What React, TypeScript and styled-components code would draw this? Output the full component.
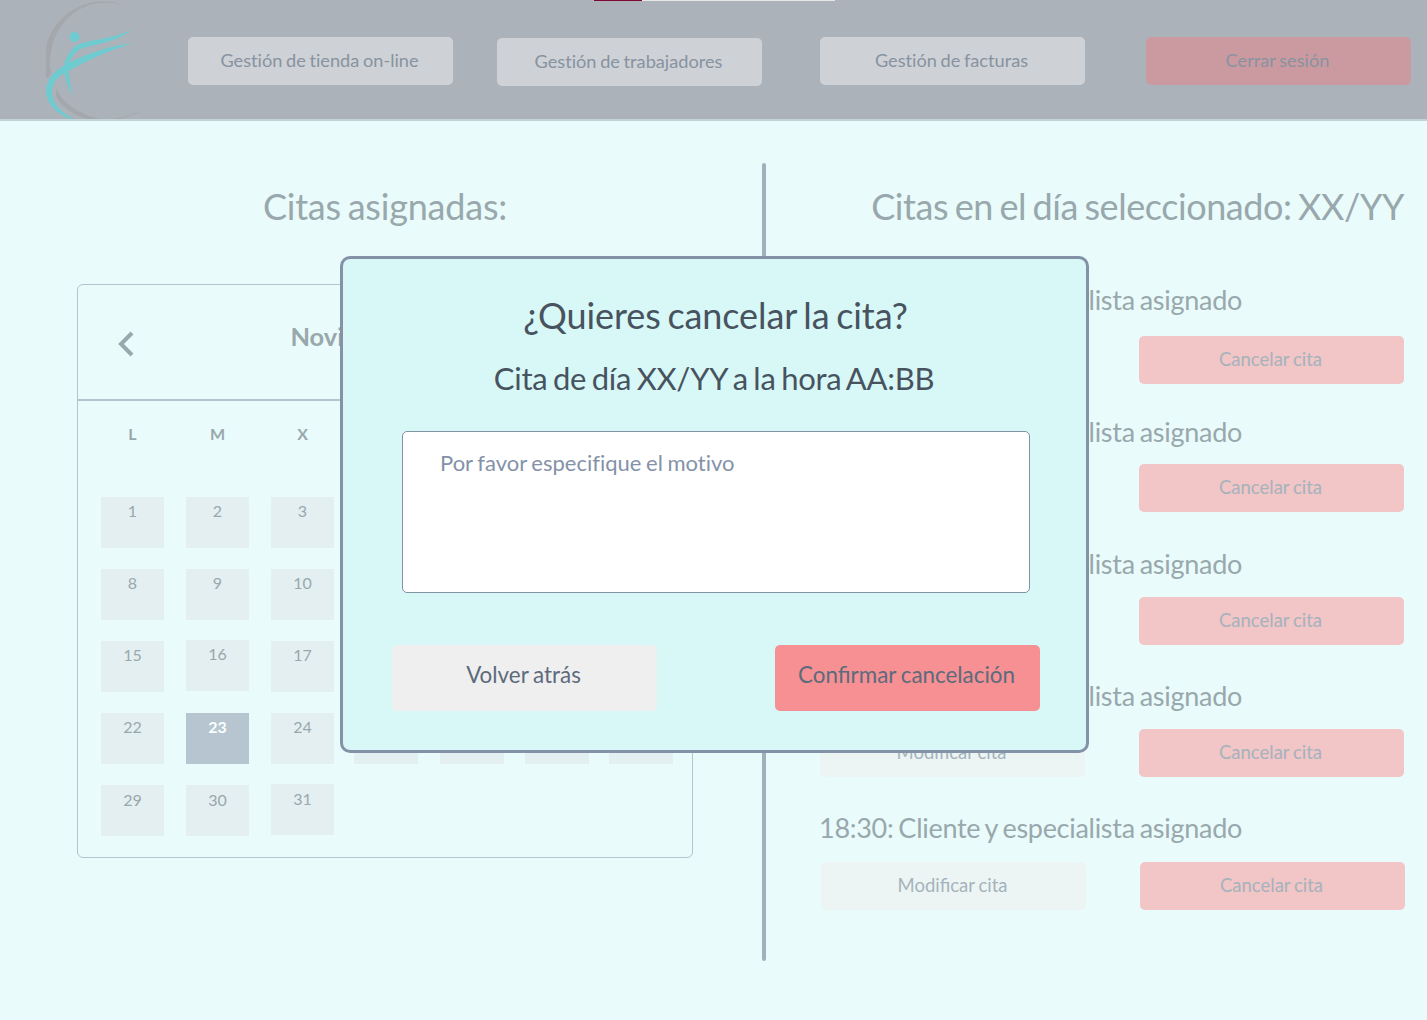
import React from 'react';
import styled, { createGlobalStyle } from 'styled-components';

const GlobalStyle = createGlobalStyle`
  *, *::before, *::after { box-sizing: border-box; }
  body {
    margin: 0;
    background: #eafbfb;
    font-family: Lato, 'Open Sans', sans-serif;
    word-spacing: -1px;
  }
  button, textarea { font-family: inherit; word-spacing: inherit; }
`;

const Page = styled.div`
  position: relative;
  width: 1427px;
  height: 1020px;
  overflow: hidden;
  background: #eafbfb;
`;

const Progress = styled.div`
  position: absolute;
  top: 0;
  left: 594px;
  width: 241px;
  height: 1px;
  background: #e4e6e8;
`;

const ProgressFill = styled.div`
  width: 48px;
  height: 1px;
  background: #7d0633;
`;

const Header = styled.header`
  display: flex;
  align-items: flex-start;
  height: 121px;
  background: #acb2ba;
  border-bottom: 2px solid #c3d3d7;
`;

const LogoMark = styled.svg`
  display: block;
  flex: none;
  width: 188px;
  height: 119px;
`;

const NavButton = styled.button<{ $gap?: number; $top?: number; $danger?: boolean }>`
  flex: none;
  width: 265px;
  height: 48px;
  margin: ${(p) => p.$top ?? 37}px 0 0 ${(p) => p.$gap ?? 0}px;
  padding: 0 2px 2px 0;
  border: 0;
  border-radius: 5px;
  background: ${(p) => (p.$danger ? '#cb9aa1' : '#ced1d6')};
  color: #8793a0;
  font-size: 18.2px;
  font-variant-ligatures: none;
  line-height: 46px;
`;

const Main = styled.main`
  display: grid;
  grid-template-columns: 762px 4px 1fr;
  height: 899px;
`;

const Divider = styled.div`
  height: 798px;
  margin-top: 42px;
  border-radius: 2px;
  background: #a1b0ba;
`;

const CalendarColumn = styled.section`
  padding: 60px 69px 0 77px;
`;

const ColumnTitle = styled.h1<{ $end?: boolean }>`
  margin: 0;
  height: 52px;
  color: #98a8ac;
  font-size: 36px;
  font-weight: 400;
  line-height: 50px;
  letter-spacing: ${(p) => (p.$end ? -0.43 : -0.2)}px;
  word-spacing: -2.3px;
  padding-right: ${(p) => (p.$end ? 1 : 0)}px;
  white-space: nowrap;
  text-align: ${(p) => (p.$end ? 'right' : 'center')};
`;

const Calendar = styled.div`
  width: 616px;
  height: 574px;
  margin-top: 51px;
  border: 1px solid #b5c4cf;
  border-radius: 6px;
`;

const CalendarHeader = styled.div`
  display: flex;
  align-items: center;
  justify-content: space-between;
  height: 116px;
  padding: 0 40px;
  border-bottom: 2px solid #b5c4cf;
`;

const Month = styled.h2`
  margin: 0 0 13px;
  color: #98a8ac;
  font-size: 25.4px;
  font-weight: 700;
  line-height: 32px;
`;

const Chevron = styled.svg<{ $flip?: boolean }>`
  width: 16px;
  height: 26px;
  margin-top: 3px;
  transform: ${(p) => (p.$flip ? 'scaleX(-1)' : 'none')};
`;

const Columns = styled.div`
  display: grid;
  grid-template-columns: 85px 85px 83.4px 85.6px 85px 84px 64px;
  padding-left: 23px;
`;

const Weekdays = styled(Columns)`
  height: 96px;
  padding-top: 22px;
`;

const Weekday = styled.span`
  width: 63px;
  color: #98a8ac;
  font-size: 16px;
  font-weight: 700;
  line-height: 22px;
  text-align: center;
`;

const Days = styled(Columns)`
  grid-auto-rows: 72px;
`;

const Day = styled.div<{ $selected?: boolean; $raised?: boolean; $low?: boolean; $wide?: boolean }>`
  width: ${(p) => (p.$wide ? 64 : 63)}px;
  height: 51px;
  margin-top: ${(p) => (p.$raised ? -1 : 0)}px;
  padding-top: ${(p) => (p.$low ? 5 : 4)}px;
  background: ${(p) => (p.$selected ? '#b7c5d0' : '#e4eff1')};
  color: ${(p) => (p.$selected ? '#fbffff' : '#98a8ac')};
  font-size: 16px;
  font-weight: ${(p) => (p.$selected ? 700 : 400)};
  line-height: 20px;
  text-align: center;
`;

const Appointments = styled.section`
  padding: 60px 22px 0 54px;
`;

const AppointmentList = styled.ul`
  margin: 47px 0 0;
  padding: 0;
  list-style: none;
`;

const Appointment = styled.li`
  height: 132px;
`;

const AppointmentName = styled.p`
  margin: 0 0 0 -1px;
  color: #98a8ac;
  font-size: 27px;
  line-height: 40px;
  letter-spacing: -0.28px;
  word-spacing: -1.73px;
  white-space: nowrap;
`;

const Actions = styled.div<{ $top: number; $shift?: number }>`
  display: flex;
  gap: 54px;
  padding-top: ${(p) => p.$top}px;
  padding-left: ${(p) => p.$shift ?? 0}px;
`;

const ActionButton = styled.button<{ $danger?: boolean }>`
  flex: none;
  width: 265px;
  height: 48px;
  padding: 0 2px 2px 0;
  border: 0;
  border-radius: 5px;
  background: ${(p) => (p.$danger ? '#f2c5c7' : '#ecf5f4')};
  color: #a4b3bc;
  font-size: 18.5px;
  line-height: 46px;
`;

const Dialog = styled.div`
  position: absolute;
  top: 256px;
  left: 340px;
  display: flex;
  flex-direction: column;
  width: 749px;
  height: 497px;
  padding: 31px 46px 0 49px;
  border: 3px solid #8492a8;
  border-radius: 10px;
  background: #d8f7f7;
  color: #47535f;
  text-align: center;
`;

const DialogTitle = styled.h2`
  margin: 0 1px 0 0;
  font-size: 36px;
  font-weight: 400;
  line-height: 50px;
  letter-spacing: -0.1px;
  word-spacing: -2.3px;
`;

const DialogSubtitle = styled.p`
  margin: 18px 4px 0 0;
  font-size: 31px;
  line-height: 40px;
  letter-spacing: -0.3px;
  word-spacing: -2px;
`;

const Reason = styled.textarea`
  width: 628px;
  height: 162px;
  margin: 33px 0 0 10px;
  padding: 16px 37px;
  border: 1px solid #8492a8;
  border-radius: 5px;
  background: #fff;
  font-size: 22px;
  font-variant-ligatures: none;
  line-height: 30px;
  resize: none;
  &::placeholder { color: #8492a8; opacity: 1; }
`;

const DialogActions = styled.div`
  display: flex;
  justify-content: space-between;
  margin-top: 52px;
`;

const DialogButton = styled.button<{ $danger?: boolean }>`
  width: 265px;
  height: 66px;
  padding: 0 2px 6px 0;
  border: 0;
  border-radius: 5px;
  background: ${(p) => (p.$danger ? '#f69092' : '#efefef')};
  color: #5c6b7c;
  font-size: 22.4px;
  line-height: 60px;
`;

const weekdays = ['L', 'M', 'X', 'J', 'V', 'S', 'D'];
const days = Array.from({ length: 31 }, (_, i) => i + 1);
const appointments = [
  { time: '10:30', top: 16 },
  { time: '12:30', top: 12 },
  { time: '15:30', top: 13 },
  { time: '16:30', top: 13 },
  { time: '18:30', top: 14, shift: 1 },
];

function Logo() {
  return (
    <LogoMark viewBox="0 0 564 357">
      <g fill="#a4a7ab">
        <path d="M365 11C342 5 313 3 284 6C200 18 143 90 138 150V231L144 233L153 219L150 198C148 110 196 28 290 10C315 7 340 8 365 11Z" />
        <path d="M168 264C182 297 220 337 291 355C341 362 386 349 427 329C387 355 334 365 272 359C220 349 180 317 168 289Z" />
      </g>
      <g fill="#6ecbd0">
        <circle cx="223.500" cy="111" r="15" />
        <path d="M192 195C201 164 217 137 247 129C290 118 335 116 392 91C366 112 335 124 294 133C257 141 231 145 217 171C210 184 207 193 200 197Z" />
        <path d="M396 131C338 133 260 161 205 190C165 211 138 235 138 276C140 312 170 340 210 357H220C185 337 157 313 156 276C157 243 174 230 204 213C266 179 328 149 396 131Z" />
        <path d="M193 215L205 210C208 237 212 262 219 288C205 265 197 242 193 215Z" />
      </g>
    </LogoMark>
  );
}

function Arrow({ flip }: { flip?: boolean }) {
  return (
    <Chevron $flip={flip} viewBox="0 0 16 26" fill="none" stroke="#98a8ac" strokeWidth="4">
      <path d="M14 2L3 13L14 24" />
    </Chevron>
  );
}

export default function App() {
  return (
    <>
      <GlobalStyle />
      <Page>
        <Header>
          <Logo />
          <NavButton>Gestión de tienda on-line</NavButton>
          <NavButton $gap={44} $top={38}>Gestión de trabajadores</NavButton>
          <NavButton $gap={58}>Gestión de facturas</NavButton>
          <NavButton $gap={61} $danger>Cerrar sesión</NavButton>
        </Header>
        <Progress>
          <ProgressFill />
        </Progress>
        <Main>
          <CalendarColumn>
            <ColumnTitle>Citas asignadas:</ColumnTitle>
            <Calendar>
              <CalendarHeader>
                <Arrow />
                <Month>Noviembre 2021</Month>
                <Arrow flip />
              </CalendarHeader>
              <Weekdays>
                {weekdays.map((d) => (
                  <Weekday key={d}>{d}</Weekday>
                ))}
              </Weekdays>
              <Days>
                {days.map((d) => (
                  <Day
                    key={d}
                    $selected={d === 23}
                    $raised={d === 16 || d === 31}
                    $low={d > 28}
                    $wide={(d - 1) % 7 > 2}
                  >
                    {d}
                  </Day>
                ))}
              </Days>
            </Calendar>
          </CalendarColumn>
          <Divider />
          <Appointments>
            <ColumnTitle $end>Citas en el día seleccionado: XX/YY</ColumnTitle>
            <AppointmentList>
              {appointments.map((a) => (
                <Appointment key={a.time}>
                  <AppointmentName>{a.time}: Cliente y especialista asignado</AppointmentName>
                  <Actions $top={a.top} $shift={a.shift}>
                    <ActionButton>Modificar cita</ActionButton>
                    <ActionButton $danger>Cancelar cita</ActionButton>
                  </Actions>
                </Appointment>
              ))}
            </AppointmentList>
          </Appointments>
        </Main>
        <Dialog role="dialog">
          <DialogTitle>¿Quieres cancelar la cita?</DialogTitle>
          <DialogSubtitle>Cita de día XX/YY a la hora AA:BB</DialogSubtitle>
          <Reason placeholder="Por favor especifique el motivo" />
          <DialogActions>
            <DialogButton>Volver atrás</DialogButton>
            <DialogButton $danger>Confirmar cancelación</DialogButton>
          </DialogActions>
        </Dialog>
      </Page>
    </>
  );
}
